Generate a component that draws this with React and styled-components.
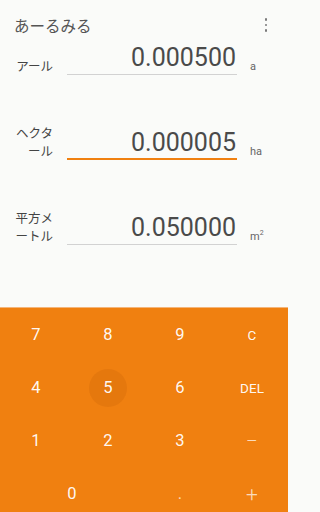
import styled, { createGlobalStyle } from "styled-components";

const GlobalStyle = createGlobalStyle`
  html, body {
    margin: 0;
    padding: 0;
    background: #fafbf9;
  }

  body {
    font-family: Roboto, "Noto Sans CJK JP", sans-serif;
  }
`;

const fields = [
  { label: ["アール"], value: "0.000500", unit: "a" },
  { label: ["ヘクタ", "ール"], value: "0.000005", unit: "ha", active: true },
  { label: ["平方メ", "ートル"], value: "0.050000", unit: "m", sup: "2" },
];

const keys = [
  { text: "7" },
  { text: "8" },
  { text: "9" },
  { text: "C", size: "small" },
  { text: "4" },
  { text: "5", pressed: true },
  { text: "6" },
  { text: "DEL", size: "small" },
  { text: "1" },
  { text: "2" },
  { text: "3" },
  { text: "−", size: "op", faded: true },
  { text: "0", wide: true },
  { text: ".", faded: true },
  { text: "+", size: "op", faded: true },
];

const keySizes = {
  small: "13.5px",
  op: "21px",
  normal: "16.5px",
};

export default function App() {
  return (
    <>
      <GlobalStyle />
      <Page>
        <Header>
          <Title>あーるみる</Title>
          <MenuButton>
            <Dot />
            <Dot />
            <Dot />
          </MenuButton>
        </Header>

        <Fields>
          {fields.map((f) => (
            <Row key={f.unit}>
              <Label>
                {f.label.map((line) => (
                  <div key={line}>{line}</div>
                ))}
              </Label>
              <Field $active={f.active}>{f.value}</Field>
              <Unit>
                {f.unit}
                {f.sup && <sup>{f.sup}</sup>}
              </Unit>
            </Row>
          ))}
        </Fields>

        <Keypad>
          {keys.map((k) => (
            <Key
              key={k.text}
              $wide={k.wide}
              $size={k.size || "normal"}
              $faded={k.faded}
              $pressed={k.pressed}
            >
              <span>{k.text}</span>
            </Key>
          ))}
        </Keypad>
      </Page>
    </>
  );
}

const Page = styled.div`
  width: 288px;
  height: 512px;

  display: flex;
  flex-direction: column;

  overflow: hidden;

  background: #fafbf9;
`;

const Header = styled.div`
  height: 37px;

  padding: 6px 21px 0 14px;

  display: flex;
  align-items: center;
  justify-content: space-between;
`;

const Title = styled.div`
  font-family: "Noto Sans CJK JP", sans-serif;
  font-size: 15.5px;

  color: #555;
`;

const MenuButton = styled.div`
  display: flex;
  flex-direction: column;
  align-items: center;
  gap: 3px;

  padding-top: 1px;
`;

const Dot = styled.div`
  width: 2.5px;
  height: 2.5px;

  border-radius: 999px;

  background: #7a7a7a;
`;

const Fields = styled.div`
  flex: 1;

  display: flex;
  flex-direction: column;
  gap: 49px;
`;

const Row = styled.div`
  display: flex;
  align-items: flex-end;
`;

const Label = styled.div`
  width: 38px;

  margin-left: 15px;

  font-family: "Noto Sans CJK JP", sans-serif;
  font-size: 12.5px;
  line-height: 18px;

  text-align: right;

  color: #444;
`;

const Field = styled.div`
  width: 169px;

  margin-left: 14px;

  padding-right: 1px;
  padding-bottom: ${({ $active }) => ($active ? "0" : "1px")};

  font-family: Roboto, sans-serif;
  font-size: 25px;
  line-height: 30px;

  text-align: right;

  color: #4a4a4a;

  border-bottom: ${({ $active }) =>
    $active ? "2px solid #f08010" : "1px solid #d2d2d2"};
`;

const Unit = styled.div`
  margin-left: 13px;
  margin-bottom: 1px;

  font-family: Roboto, sans-serif;
  font-size: 11px;
  line-height: 14px;

  color: #666;

  sup {
    font-size: 7px;
    vertical-align: 5px;
    line-height: 0;
  }
`;

const Keypad = styled.div`
  height: 204px;

  display: grid;
  grid-template-columns: repeat(4, 72px);
  grid-auto-rows: 53px;

  overflow: hidden;

  background: #f08010;

  box-shadow: 0 -1px 0 #f4b57a;
`;

const Key = styled.div`
  position: relative;

  grid-column: ${({ $wide }) => ($wide ? "span 2" : "auto")};

  display: flex;
  align-items: center;
  justify-content: center;

  font-family: Roboto, sans-serif;
  font-size: ${({ $size }) => keySizes[$size]};
  font-weight: ${({ $size }) => ($size === "op" ? 300 : 400)};

  color: ${({ $faded }) =>
    $faded ? "rgba(255, 255, 255, 0.72)" : "rgba(255, 255, 255, 0.96)"};

  &::before {
    content: "";

    display: ${({ $pressed }) => ($pressed ? "block" : "none")};

    position: absolute;
    left: 50%;
    top: 50%;

    width: 38px;
    height: 38px;

    transform: translate(-50%, -50%);

    border-radius: 999px;

    background: rgba(160, 70, 0, 0.14);
  }

  span {
    position: relative;
  }
`;
